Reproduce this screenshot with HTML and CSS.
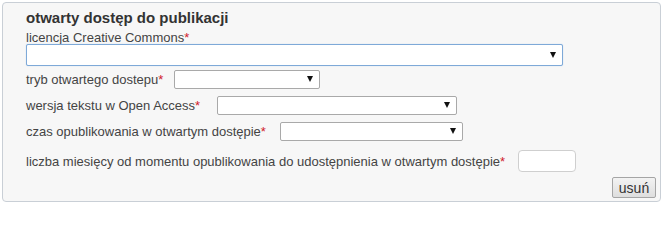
FILE: index.html
```html
<!DOCTYPE html>
<html lang="pl">
<head>
<meta charset="utf-8">
<title>otwarty dostęp do publikacji</title>
<link rel="stylesheet" href="styles.css">
</head>
<body>
<div class="box">
  <div class="title">otwarty dostęp do publikacji</div>
  <div class="label-top">licencja Creative Commons<span class="req">*</span></div>
  <div class="select select-wide focused"><span class="arrow"></span></div>
  <div class="row">
    <span class="label">tryb otwartego dostepu<span class="req">*</span></span>
    <div class="select w146"><span class="arrow"></span></div>
  </div>
  <div class="row">
    <span class="label label-wide">wersja tekstu w Open Access<span class="req">*</span></span>
    <div class="select w240"><span class="arrow"></span></div>
  </div>
  <div class="row">
    <span class="label label-mid">czas opublikowania w otwartym dostępie<span class="req">*</span></span>
    <div class="select w183"><span class="arrow"></span></div>
  </div>
  <div class="row row-input">
    <span class="label">liczba miesięcy od momentu opublikowania do udostępnienia w otwartym dostępie<span class="req">*</span></span>
    <div class="text-input"></div>
  </div>
  <div class="actions">
    <button class="btn" type="button">usuń</button>
  </div>
</div>
</body>
</html>
```

FILE: styles.css
```css
html, body {
  margin: 0;
  padding: 0;
  background: #ffffff;
}
body {
  font-family: "Liberation Sans", Arial, sans-serif;
  font-size: 13px;
  color: #444;
}
.box {
  box-sizing: border-box;
  margin: 2px 2px 0 2px;
  width: 659px;
  height: 200px;
  border: 1px solid #c9cfd6;
  border-radius: 4px;
  background: #f7f7f7;
  padding: 0 4px 0 23px;
  display: flex;
  flex-direction: column;
}
.title {
  font-weight: bold;
  font-size: 15px;
  line-height: 20px;
  color: #333;
  margin-top: 5px;
}
.label-top {
  line-height: 15px;
  margin-top: 2px;
}
.req {
  color: #d0202a;
}
.select {
  position: relative;
  box-sizing: border-box;
  height: 19px;
  border: 1px solid #a9a9a9;
  border-radius: 2px;
  background: #fff;
}
.select-wide {
  width: 537px;
  height: 22px;
  margin-top: -1px;
}
.focused {
  border-color: #7ea9d8;
  box-shadow: 0 0 1px #a9c8ea;
}
.w146 { width: 146px; }
.w240 { width: 240px; }
.w183 { width: 183px; }
.arrow {
  position: absolute;
  right: 6px;
  top: 50%;
  margin-top: -3px;
  width: 0;
  height: 0;
  border-left: 3.5px solid transparent;
  border-right: 3.5px solid transparent;
  border-top: 6px solid #111;
}
.row {
  display: flex;
  align-items: center;
  height: 26px;
}
.row:first-of-type {
  margin-top: 3px;
}
.label {
  margin-right: 11px;
}
.label-wide {
  margin-right: 17px;
}
.label-mid {
  margin-right: 14px;
}
.row-input {
  height: 22px;
  margin-top: 6px;
}
.text-input {
  box-sizing: border-box;
  width: 58px;
  height: 22px;
  border: 1px solid #cfcfcf;
  border-radius: 4px;
  background: #fff;
  margin-left: 2px;
}
.actions {
  display: flex;
  justify-content: flex-end;
  margin-top: 5px;
}
.btn {
  box-sizing: border-box;
  height: 21px;
  width: 44px;
  padding: 0;
  font-family: "Liberation Sans", Arial, sans-serif;
  font-size: 14px;
  color: #333;
  border: 1px solid #a5a5a5;
  border-radius: 2px;
  background: linear-gradient(#f3f3f3, #dedede);
}
```
